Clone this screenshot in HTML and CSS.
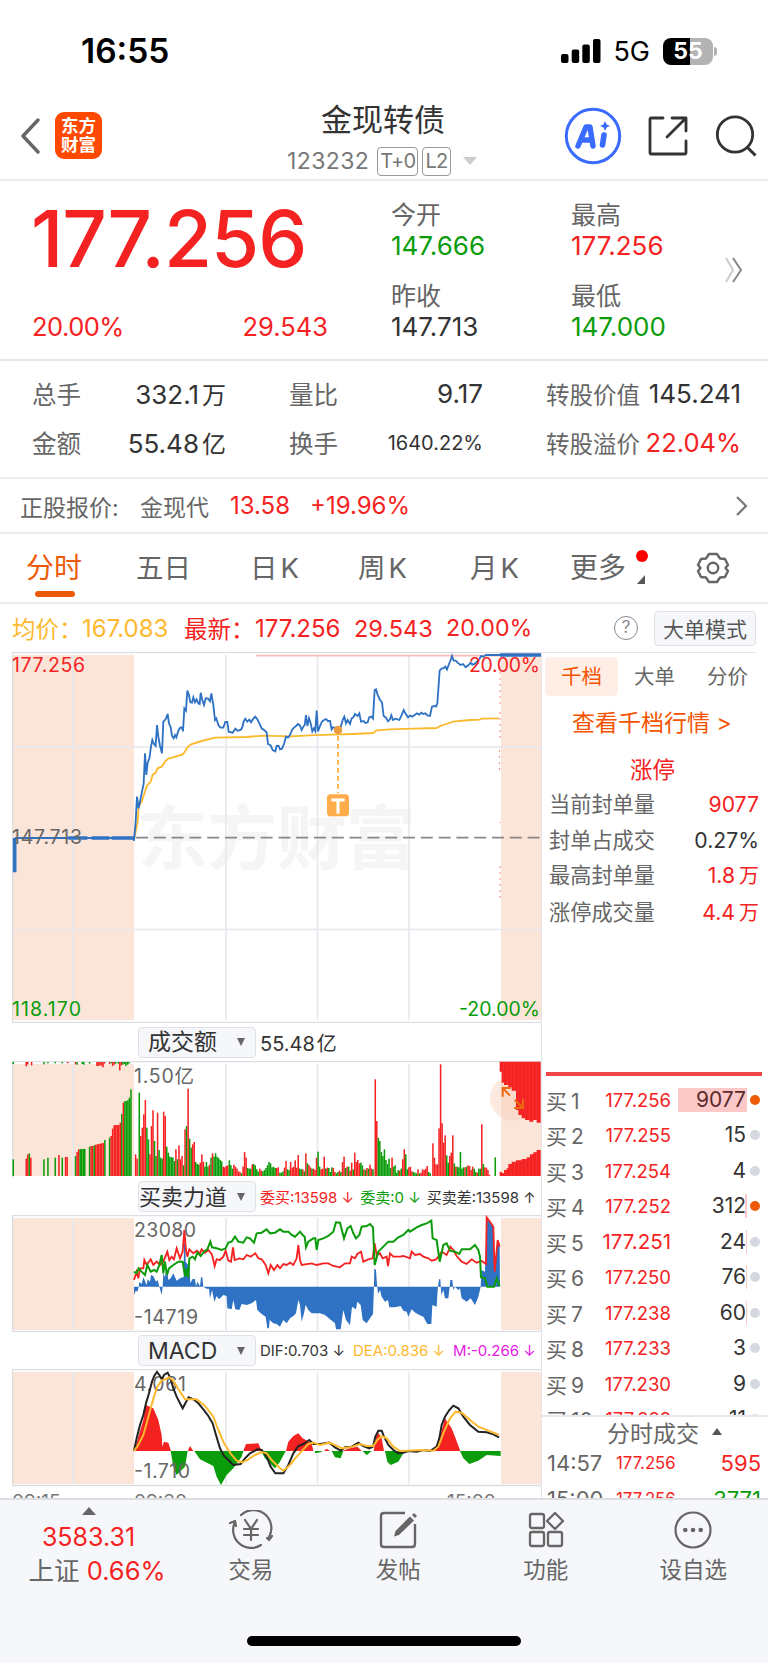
FILE: index.html
```html
<!DOCTYPE html>
<html lang="zh-CN">
<head>
  <meta charset="UTF-8" />
  <meta name="viewport" content="width=device-width, initial-scale=1.0"/>
  <title>金现转债 123232</title>
  <link rel="stylesheet" href="styles.css">
</head>
<body>
<div class="app">
  <div class="status-bar">
    <div class="clock">16:55</div>
    <div class="status-icons">
      <svg width="40" height="24" viewBox="0 0 40 24"><rect x="0" y="15" width="7.5" height="9" rx="2"/><rect x="10.7" y="10.5" width="7.5" height="13.5" rx="2"/><rect x="21.3" y="5.5" width="7.5" height="18.5" rx="2"/><rect x="32" y="0" width="7.5" height="24" rx="2"/></svg>
      <span class="network">5G</span>
      <div class="battery">55</div>
    </div>
  </div>

  <header>
    <svg class="back" width="20" height="36" viewBox="0 0 20 36"><path d="M18 2 3 18l15 16" fill="none" stroke="#666" stroke-width="3.4" stroke-linecap="round" stroke-linejoin="round"/></svg>
    <div class="logo">东方<br>财富</div>
    <div class="title">
      <h1>金现转债</h1>
      <div class="code">123232 <b>T+0</b><b>L2</b><i></i></div>
    </div>
    <div class="header-icons">
      <svg width="58" height="58" viewBox="0 0 58 58"><circle cx="29" cy="29" r="26.7" fill="none" stroke="#3a6bff" stroke-width="3"/><path d="m14 39 8-19h4l3 19M18 33h9" fill="none" stroke="#3a6bff" stroke-width="5.4" stroke-linejoin="round" stroke-linecap="round"/><path d="m40 28-1.5 10" stroke="#3a6bff" stroke-width="5.6" stroke-linecap="round"/><path d="m41 14 1.6 3.4L46 19l-3.4 1.6L41 24l-1.6-3.4L36 19l3.400-1.600z" fill="#3a6bff"/></svg>
      <svg class="share" width="42" height="42" viewBox="0 0 42 42"><path d="M16 3H4.500Q3 3 3 4.500v33Q3 39 4.500 39h33q1.500 0 1.500-1.500V26M25 3h14v13M39 3 20 22" fill="none" stroke="#333" stroke-width="2.800" stroke-linecap="round" stroke-linejoin="round"/></svg>
      <svg width="42" height="42" viewBox="0 0 42 42"><circle cx="20" cy="19.500" r="17.700" fill="none" stroke="#333" stroke-width="2.800"/><path d="m32 32 8.500 8.500" stroke="#333" stroke-width="3"/></svg>
    </div>
  </header>

  <section class="quote">
    <div class="last">
      <div class="price red">177.256</div>
      <div class="change red"><span>20.00%</span><span>29.543</span></div>
    </div>
    <dl><dt>今开</dt><dd class="green">147.666</dd><dt>昨收</dt><dd>147.713</dd></dl>
    <dl><dt>最高</dt><dd class="red">177.256</dd><dt>最低</dt><dd class="green">147.000</dd></dl>
    <svg class="more" width="20" height="26" viewBox="0 0 20 26"><path d="m2 1 7 12-7 12" fill="none" stroke="#ccc" stroke-width="2"/><path d="m9 1 8 12-8 12" fill="none" stroke="#888" stroke-width="2"/></svg>
  </section>

  <section class="stats">
    <div><label>总手</label><span>332.1<em>万</em></span></div>
    <div><label>量比</label><span>9.17</span></div>
    <div><label>转股价值</label><span>145.241</span></div>
    <div><label>金额</label><span>55.48<em>亿</em></span></div>
    <div><label>换手</label><span class="small">1640.22%</span></div>
    <div><label>转股溢价</label><span class="red">22.04%</span></div>
  </section>

  <section class="underlying">
    <span class="u-label">正股报价:</span><span class="u-name">金现代</span><span class="red u-price">13.58</span><span class="red">+19.96%</span>
    <svg width="14" height="22" viewBox="0 0 14 22"><path d="m2 2 9 9-9 9" fill="none" stroke="#777" stroke-width="2.200"/></svg>
  </section>

  <nav class="tabs">
    <a class="active">分时</a><a>五日</a><a>日<s>K</s></a><a>周<s>K</s></a><a>月<s>K</s></a><a class="dotted">更多</a>
    <svg width="34" height="34" viewBox="0 0 34 34"><path d="M13 3h8l3 4.500 5 .5 3 6-2.500 3L32 20l-3 6-5 .5L21 31h-8l-3-4.500-5-.5-3-6L4.500 17 2 14l3-6 5-.5z" fill="none" stroke="#666" stroke-width="2.400" stroke-linejoin="round"/><circle cx="17" cy="17" r="5.200" fill="none" stroke="#666" stroke-width="2.400"/></svg>
  </nav>

  <div class="info-line">
    <span class="avg">均价：</span><span class="avg a-val">167.083</span>
    <span class="red latest">最新：</span><span class="red v1">177.256</span><span class="red v2">29.543</span><span class="red v3">20.00%</span>
    <div class="help">?</div>
    <button>大单模式</button>
  </div>

  <main>
    <div class="charts">
      <svg width="530" height="371" viewBox="12 652 530 371">
        <g class="mark"><text x="138" y="864" textLength="278">东方财富</text></g>
        <path class="pre" d="M13 655h121v365H13zM501 655h40v365h-40z"/>
        <path class="grid" d="M73 655v365M226 655v365M317.500 655v365M409 655v365M13 747h528M13 929.500h528"/>
        <path class="frame" d="M12 652.500h530M12.500 652v371M12 1022.500h530"/>
        <path d="M136 837.700h404" stroke="#888" stroke-width="1.800" stroke-dasharray="12 5.800"/>
        <path d="M500 660v46M500 712v26M499.500 750v24M500 822v1M500 866v32" stroke="#f99" stroke-width="1.200" stroke-dasharray="2 4"/>
        <g class="lines" transform="translate(0 640) scale(.33333)">
          <path d="M768 47H1500" stroke="#fcb9b9"/>
          <path stroke="#fdb92e" d="M402 600L413 545 416 500 425 485 435 455 440 438 452 425 458 404 467 398 473 385 485 380 495 365 505 356 520 352 548 343 555 335 562 322 575 312 605 303 645 293 740 291 790 287 870 289 930 286 995 284 1060 282 1120 279 1130 271 1170 268 1240 266 1310 264 1320 258 1360 245 1410 240 1440 239 1446 236 1497 235"/>
          <path stroke="#2f72c4" d="M45 594H400L402 602 407 545 411 470 416 505 421 480 426 455 431 430 435 340 439 405 443 368 448 355 453 320 457 300 462 312 467 318 471 255 475 290 480 318 486 340 490 245 497 238 503 222 507 250 512 262 516 287 521 295 525 285 529 292 535 272 541 263 546 262 549 274 553 205 558 212 562 152 567 165 571 187 576 188 580 172 585 187 590 178 595 190 599 192 602 158 607 180 612 195 617 175 624 176 630 184 634 160 640 195 645 240 649 235 655 255 661 263 670 263 676 246 682 246 686 275 698 278 706 266 713 272 722 270 727 262 731 245 736 236 742 245 748 239 753 247 760 236 766 230 772 238 778 250 785 265 792 270 800 277 804 312 812 316 818 330 826 334 830 318 836 318 840 328 846 326 852 312 858 290 864 293 870 285 876 270 882 263 888 258 894 252 900 257 905 270 910 260 914 255 918 225 922 258 927 235 932 250 937 274 942 265 946 273 950 212 954 274 960 258 966 245 972 240 978 237 984 243 990 243 995 268 999 262 1014 266 1022 262 1028 240 1033 230 1038 250 1043 240 1050 252 1055 235 1060 232 1065 222 1073 228 1078 220 1083 245 1090 243 1097 249 1103 247 1108 232 1114 230 1119 236 1124 150 1128 148 1133 165 1140 180 1146 187 1151 228 1158 233 1164 244 1170 238 1174 226 1179 240 1186 236 1192 238 1198 240 1204 228 1211 210 1216 220 1224 232 1230 227 1237 230 1244 225 1251 220 1258 224 1264 218 1270 222 1276 220 1282 226 1290 228 1296 200 1303 198 1308 200 1312 190 1319 92 1325 86 1331 84 1336 80 1341 88 1347 72 1352 60 1356 48 1361 62 1367 62 1375 70 1382 75 1389 72 1397 82 1405 76 1412 68 1417 74 1424 72 1431 65 1437 60 1443 48 1450 50 1458 45H1500"/>
          <path stroke="#2f72c4" stroke-width="11" d="M1500 45H1623M44 594V697"/>
          <path stroke="#2f72c4" stroke-width="10" d="M205 594H262M275 594H328M335 594H404"/>
          <path stroke="#ffad42" stroke-dasharray="14 10" d="M1014 288V460"/>
          <circle cx="1014" cy="270" r="13" fill="#ee9c42"/>
          <rect x="981" y="463" width="66" height="66" rx="11" fill="#ffad4a"/>
          <path d="M994 480H1034M1014 480V521" stroke="#fff" stroke-width="9"/>
        </g>
        <g class="labels">
          <text class="f-red" x="12" y="672" textLength="73">177.256</text>
          <text x="12" y="844" textLength="70">147.713</text>
          <text class="f-green" x="12" y="1016" textLength="69">118.170</text>
          <text class="f-red" x="469" y="672" textLength="71">20.00%</text>
          <text class="f-green" x="459" y="1016" textLength="81">-20.00%</text>
        </g>
      </svg>

      <div class="ind-head"><div class="pick">成交额<i></i></div><span class="amount">55.48<em>亿</em></span></div>
      <svg id="volume" width="530" height="117" viewBox="12 1061 530 117">
        <path class="pre" d="M13 1064h121v112H13zM501 1064h40v112h-40z"/>
        <path class="grid" d="M73 1064v112M226 1064v112M317.500 1064v112M409 1064v112"/>
        <path class="frame" d="M12 1061.500h530M12.500 1061v117"/>
        <g class="labels"><text x="134" y="1083" textLength="60">1.50亿</text></g>
        <g transform="translate(0 1015) scale(.33333)">
          <g id="bars"></g>
          <circle cx="1537" cy="250" r="67" fill="#f9cdb7" fill-opacity=".42"/>
          <path fill="#f52222" d="M1499 140V170H1505V203H1512V210H1525V217H1535V227H1548V285H1555V300H1565V310H1575V315H1588V320H1600V315H1610V323H1622V140zM1499 483V470H1505V474H1512V465H1520V460H1525V447H1535V440H1548V436H1565V432H1580V427H1590V418H1600V412H1610V405H1622V483z"/>
          <path stroke="#fff" stroke-opacity=".22" d="M1511 141V203M1522 141V210M1533 141V220M1544 141V225M1555 141V295M1566 141V305M1577 141V312M1588 141V315M1599 141V315M1610 141V318M1533 445V483M1544 440V483M1555 440V483M1566 435V483M1577 432V483M1588 425V483M1599 416V483M1610 410V483"/>
          <path fill="none" stroke="#ec6a12" stroke-width="6" d="M1508 245V219H1532M1508 219L1530 242M1569 253V279H1542M1569 279L1544 255"/>
        </g>
      </svg>

      <div class="ind-head"><div class="pick tight">买卖力道<i></i></div><span class="red">委买:13598 ↓</span><span class="green">委卖:0 ↓</span><span>买卖差:13598 ↑</span></div>
      <svg width="530" height="117" viewBox="12 1215 530 117">
        <path class="pre" d="M13 1218h121v112H13zM501 1218h40v112h-40z"/>
        <path class="grid" d="M73 1218v112M226 1218v112M317.500 1218v112M409 1218v112"/>
        <path class="frame" d="M12 1215.500h530M12.500 1215v117M12 1331.500h530"/>
        <g class="lines" transform="translate(0 1190) scale(.33333)">
          <path class="f-blue" stroke="none" d="M402 290V315L407 302 412 305 416 292 418 275 425 282 430 262 440 285 443 268 450 275 453 255 460 258 468 275 473 270 478 290 485 315 488 290 490 250 495 262 500 230 505 270 512 265 520 250 530 272 540 265 548 262 551 262 552 160 556 160 557 215 568 230 571 280 578 266 585 268 588 289 592 275 600 289 603 262 607 262 610 290 620 296 627 296 630 325 636 300 643 335 650 318 657 328 670 315 680 318 682 355 695 358 700 330 706 358 718 360 725 342 740 345 755 340 768 330 772 360 785 372 797 380 802 415 807 415 809 390 820 400 830 402 840 410 850 390 860 400 870 385 880 378 888 370 895 330 900 345 905 395 912 370 917 345 925 360 935 370 960 370 975 375 990 388 1005 400 1008 418 1022 418 1030 360 1038 390 1050 405 1056 350 1068 358 1072 335 1082 345 1088 390 1100 400 1110 385 1119 372 1122 290 1123 235 1128 240 1130 270 1134 312 1140 300 1145 320 1155 335 1164 330 1168 352 1185 352 1202 348 1210 362 1220 365 1225 380 1235 358 1246 368 1258 375 1270 380 1282 402 1294 402 1297 345 1310 350 1313 300 1317 268 1321 268 1324 315 1330 300 1335 325 1345 325 1349 290 1351 270 1357 270 1360 300 1365 290 1375 300 1380 295 1385 325 1400 335 1412 325 1425 345 1435 320 1442 290 1444 240 1455 245 1460 82 1470 95 1480 108 1485 245 1493 150 1499 165 1500 290z"/>
          <path stroke="#f52222" d="M402 270L410 245 415 265 420 235 430 235 433 210 440 225 452 208 460 225 470 215 480 225 490 215 502 185 508 210 515 200 522 208 530 175 540 205 548 185 553 120 558 180 562 200 568 178 580 190 590 182 600 190 605 178 615 188 625 180 635 192 640 210 644 228 650 208 660 210 670 200 677 182 685 212 693 215 699 172 704 210 718 205 730 208 740 195 752 200 766 190 775 205 785 208 797 225 805 250 812 225 822 240 832 225 840 235 850 222 860 225 870 218 880 225 890 205 895 165 900 210 905 225 935 220 950 225 970 220 985 220 1000 228 1020 232 1035 220 1050 220 1055 200 1065 205 1072 192 1083 185 1090 215 1105 208 1118 205 1124 160 1130 195 1140 190 1148 205 1160 200 1164 228 1170 190 1180 200 1200 200 1210 198 1230 205 1235 185 1245 195 1260 192 1270 200 1285 205 1295 212 1308 208 1315 200 1325 185 1340 195 1351 170 1360 180 1370 198 1385 215 1400 222 1415 208 1430 218 1445 213 1458 222 1460 82 1470 95 1480 110 1484 245 1493 150 1499 170"/>
          <path stroke="#0a9c0a" stroke-width="6" d="M402 245L410 250 416 235 425 245 435 255 442 225 452 245 462 240 470 245 478 225 485 195 490 250 495 215 501 255 507 235 520 225 535 215 548 215 552 240 556 260 560 235 565 262 568 205 578 200 585 208 592 188 602 198 612 185 622 178 631 155 636 172 650 175 665 180 677 175 685 158 695 155 705 140 715 155 730 158 740 142 750 145 762 158 770 130 785 128 800 118 810 130 825 128 840 118 850 125 865 125 875 135 885 140 900 125 908 135 914 140 918 172 925 155 940 145 946 145 950 180 955 150 970 145 985 138 1000 125 1008 97 1020 98 1032 145 1042 115 1052 108 1060 130 1068 145 1078 135 1085 110 1100 108 1110 102 1119 112 1124 225 1135 185 1150 170 1165 155 1180 155 1195 142 1210 135 1225 120 1230 125 1250 112 1265 105 1280 100 1294 92 1298 145 1310 150 1319 215 1330 165 1340 160 1350 182 1365 185 1378 192 1385 178 1410 178 1425 165 1435 180 1440 200 1443 262 1455 265 1462 290 1482 290 1490 265 1499 288"/>
        </g>
        <g class="labels"><text x="134" y="1237" textLength="62">23080</text><text x="134" y="1324" textLength="64">-14719</text></g>
      </svg>

      <div class="ind-head"><div class="pick">MACD<i></i></div><span class="dif">DIF:0.703 ↓</span><span class="avg dea">DEA:0.836 ↓</span><span class="purple">M:-0.266 ↓</span></div>
      <svg width="530" height="118" viewBox="12 1369 530 118">
        <path class="pre" d="M13 1372h121v112H13zM501 1372h40v112h-40z"/>
        <path class="grid" d="M73 1372v112M226 1372v112M317.500 1372v112M409 1372v112"/>
        <path class="frame" d="M12 1369.500h530M12.500 1369v117M12 1485.500h530"/>
        <g class="labels"><text x="134" y="1391" textLength="52">4.061</text></g>
        <g class="lines" transform="translate(0 1190) scale(.33333)">
          <path class="f-red" stroke="none" d="M404 783L415 740 430 690 437 645 460 655 475 690 485 735 487 770 492 755 505 758 513 783zM563 783L570 768 580 783zM730 783L738 762 775 760 785 783zM858 783L865 755 880 738 895 730 908 745 935 760 940 783zM972 783L980 776 990 783zM1025 783L1050 775 1072 770 1085 783zM1121 783L1128 740 1135 728 1145 745 1152 783zM1305 783L1320 740 1335 685 1355 715 1365 740 1381 783z"/>
          <path class="f-green" stroke="none" d="M512 783L520 830 530 855 545 840 555 830 563 783zM583 783L600 808 640 828 650 860 663 885 680 855 700 835 725 800 730 783zM783 783L795 805 825 835 840 815 857 783zM945 783V790L965 786V783zM995 783L1005 802 1022 805 1030 783zM1088 783L1100 796 1115 783zM1155 783L1162 815 1172 825 1195 815 1210 790 1212 783zM1380 783L1390 805 1408 822 1435 812 1460 795 1502 798V783z"/>
          <path stroke="#222" stroke-width="6" d="M402 783L410 745 420 705 430 675 438 640 447 610 456 575 463 557 471 546 478 555 486 568 492 555 503 548 510 562 520 595 530 620 540 640 548 655 556 640 566 622 580 628 595 640 610 658 625 678 638 700 648 735 660 775 672 798 685 810 700 825 722 822 735 805 750 790 772 778 785 780 800 800 812 830 826 850 850 850 865 825 880 790 895 768 910 762 928 750 940 762 960 762 988 758 1005 772 1022 782 1035 772 1055 770 1075 758 1090 768 1108 775 1119 770 1126 740 1135 722 1145 722 1152 740 1165 765 1180 780 1195 790 1210 788 1225 783 1250 785 1270 780 1290 783 1310 770 1318 745 1325 705 1335 680 1348 660 1360 647 1375 655 1390 680 1410 705 1435 725 1460 727 1480 733 1497 742"/>
          <path stroke="#fdb92e" stroke-width="6" d="M402 783L415 765 430 735 440 700 452 655 462 620 472 590 485 572 508 562 520 572 540 605 555 628 570 628 590 628 615 648 640 680 655 720 672 760 695 795 710 812 727 817 745 808 765 795 785 786 800 790 815 810 840 835 850 842 870 825 890 800 910 778 925 762 940 758 960 765 988 758 1005 765 1025 775 1050 772 1080 762 1100 768 1120 768 1132 750 1145 738 1160 745 1180 770 1200 783 1270 780 1300 782 1315 770 1330 730 1350 685 1367 665 1385 668 1410 690 1435 710 1465 722 1497 735"/>
        </g>
        <g class="labels"><text x="134" y="1478" textLength="56">-1.710</text></g>
      </svg>
      <div class="times"><span>09:15</span><span>09:30</span><span>15:00</span></div>
    </div>

    <aside>
      <div class="side-tabs"><a class="active">千档</a><a>大单</a><a>分价</a></div>
      <a class="depth-link">查看千档行情 <span>&gt;</span></a>
      <h2 class="red">涨停</h2>
      <ul class="limit">
        <li>当前封单量<span class="red">9077</span></li>
        <li>封单占成交<span>0.27%</span></li>
        <li>最高封单量<span class="red">1.8<em>万</em></span></li>
        <li>涨停成交量<span class="red">4.4<em>万</em></span></li>
      </ul>
      <div class="bids" id="bids"></div>
      <div class="deals">
        <h3>分时成交<i></i></h3>
        <div class="deal"><span>14:57</span><span class="red p">177.256</span><span class="red v">595</span></div>
        <div class="deal"><span>15:00</span><span class="red p">177.256</span><span class="green v">3771</span></div>
      </div>
    </aside>
  </main>

  <footer>
    <div class="index">
      <i></i>
      <div class="red">3583.31</div>
      <div class="index-line">上证 <span class="red">0.66%</span></div>
    </div>
    <a><svg width="44" height="40" viewBox="0 0 44 40"><g fill="none" stroke="#666" stroke-width="2.200" stroke-linecap="round" stroke-linejoin="round"><path d="M12 5A18 18 0 0 1 40 27M32 35A18 18 0 0 1 6 12M1 13l5-2 1 5M38 28l2 2 3-4"/><path d="m16 10 6 9 6-9M22 19v11M15 19h14M15 25h14"/></g></svg>交易</a>
    <a><svg width="40" height="40" viewBox="0 0 40 40"><path d="M27 3H6Q3 3 3 6v28q0 3 3 3h28q3 0 3-3V14" fill="none" stroke="#666" stroke-width="2.400"/><path d="M16 26.500 17.500 21 32 6.500l4 4L21 25z" fill="#666"/><path d="m34 5 2-2 3 3-2 2z" fill="#666"/></svg>发帖</a>
    <a><svg width="40" height="40" viewBox="0 0 40 40"><g fill="none" stroke="#666" stroke-width="2.300" stroke-linejoin="round"><rect x="4" y="4" width="14" height="14" rx="2"/><path d="m29 3 8 8-8 8-8-8z"/><rect x="4" y="22" width="14" height="14" rx="2"/><rect x="22" y="22" width="14" height="14" rx="2"/></g></svg>功能</a>
    <a><svg width="40" height="40" viewBox="0 0 40 40"><circle cx="20" cy="20" r="17.500" fill="none" stroke="#666" stroke-width="2.200"/><g fill="#666"><circle cx="12.300" cy="20" r="2.300"/><circle cx="20" cy="20" r="2.300"/><circle cx="27.700" cy="20" r="2.300"/></g></svg>设自选</a>
    <div class="home-indicator"></div>
  </footer>
</div>
<script src="script.js"></script>
</body>
</html>
```
FILE: styles.css
```css
:root {
  --red: #f52222;
  --green: #0a9c0a;
  --orange: #f55300;
  --text: #333;
  --sub: #666;
  --line: #ececee;
  --bar: #f6f7fa;
}

* {
  box-sizing: border-box;
}

body {
  margin: 0;
  font-family: Inter, 'Noto Sans CJK SC', sans-serif;
  color: var(--text);
  background: #fff;
}

h1, h2, h3, ul, dl, dd {
  margin: 0;
  padding: 0;
  font-weight: 400;
}

svg {
  display: block;
  flex: none;
}

em, s {
  font-style: normal;
  text-decoration: none;
}

.red { color: var(--red); }
.green { color: var(--green); }
.avg { color: #fdb92e; }
.purple { color: #e31be3; }
.f-red { fill: var(--red); }
.f-green { fill: var(--green); }
.f-blue { fill: #2f72c4; }

.app {
  width: 768px;
  height: 1663px;
  overflow: hidden;
  display: flex;
  flex-direction: column;
}

.app > * {
  flex: none;
}

.status-bar {
  height: 92px;
  padding: 10px 50px 0 81px;
  display: flex;
  justify-content: space-between;
  align-items: center;
  color: #000;
}

.clock {
  font-size: 33.5px;
  font-weight: 600;
}

.status-icons {
  display: flex;
  align-items: center;
}

.network {
  font-size: 27px;
  margin: 0 13px 0 12px;
}

.battery {
  position: relative;
  width: 50px;
  height: 27px;
  border-radius: 8px;
  background: linear-gradient(90deg, #000 55%, #b3b3b3 55%);
  color: #fff;
  font-size: 23px;
  font-weight: 700;
  line-height: 27px;
  text-align: center;
  margin-right: 5px;
}

.battery::after {
  content: "";
  position: absolute;
  right: -4px;
  top: 9px;
  width: 3px;
  height: 9px;
  border-radius: 0 3px 3px 0;
  background: #b3b3b3;
}

header {
  height: 89px;
  border-bottom: 2px solid #ececec;
  padding: 0 11px 0 20px;
  display: flex;
  align-items: center;
}

.logo {
  width: 47px;
  height: 47px;
  margin-left: 15px;
  border-radius: 9px;
  background: #ff4800;
  color: #fff;
  font-size: 17.5px;
  font-weight: 700;
  line-height: 19px;
  padding-top: 4px;
  text-align: center;
}

.title {
  width: 210px;
  margin-left: 176px;
  text-align: center;
  align-self: flex-start;
}

.title h1 {
  font-size: 31px;
  line-height: 56px;
}

.code {
  display: flex;
  align-items: center;
  height: 26px;
  margin-left: 9px;
  font-size: 23px;
  letter-spacing: .4px;
  color: #777;
}

.code b {
  font-weight: 400;
  font-size: 20px;
  letter-spacing: -.7px;
  line-height: 27px;
  padding: 0 2px;
  border: 1.5px solid #999;
  border-radius: 4px;
  margin-left: 4px;
}

.code b:first-child {
  margin-left: 8px;
}

.code i {
  margin-left: 12px;
  border: 7px solid transparent;
  border-top: 8px solid #ccc;
  border-bottom: 0;
}

.header-icons {
  display: flex;
  align-items: center;
  margin-left: auto;
}

.share {
  margin: 0 26px 0 25px;
}

.quote {
  height: 180px;
  border-bottom: 2px solid #e2e6ee;
  display: flex;
}

.last {
  width: 391px;
  padding-left: 31px;
}

.price {
  font-size: 78px;
  font-weight: 500;
  line-height: 100px;
  margin-top: 8px;
  letter-spacing: -1px;
}

.change {
  display: flex;
  justify-content: space-between;
  width: 297px;
  padding-left: 1px;
  font-size: 25.5px;
  line-height: 30px;
  margin-top: 23px;
}

.change span:first-child {
  letter-spacing: -.5px;
}

.quote dl {
  width: 180px;
  padding-top: 18px;
  font-size: 26px;
  line-height: 32px;
}

.quote dt {
  color: var(--sub);
  font-size: 25px;
  height: 32px;
}

.quote dd {
  height: 49px;
  line-height: 30px;
}

.more {
  margin: 76px 0 0 -27px;
}

.stats {
  height: 118px;
  border-bottom: 2px solid var(--line);
  padding: 8px 27px 0 32px;
  display: grid;
  grid-template-columns: 194px 194px 195px;
  grid-auto-rows: 49px;
  justify-content: space-between;
  font-size: 26px;
}

.stats div {
  display: flex;
  justify-content: space-between;
  align-items: center;
}

.stats label {
  color: var(--sub);
  font-size: 24.5px;
}

.stats div:nth-child(3n) label {
  font-size: 23.5px;
}

.stats em {
  margin-left: 3px;
  font-size: 24px;
}

.stats .small {
  font-size: 20px;
}

.stats .red {
  font-size: 25.5px;
}

.underlying {
  height: 55px;
  border-bottom: 2px solid var(--line);
  padding: 0 19px 0 20px;
  display: flex;
  align-items: center;
  font-size: 24px;
}

.u-label, .u-name {
  color: var(--sub);
  font-size: 23px;
}

.u-label { width: 120px; }
.u-name { width: 90px; }
.u-price { width: 80px; }

.underlying svg {
  margin-left: auto;
}

.tabs {
  height: 70px;
  border-bottom: 2px solid var(--line);
  display: flex;
  align-items: center;
  font-size: 27.5px;
  color: var(--sub);
  padding-left: 26px;
}

.tabs a {
  width: 110px;
  height: 68px;
  line-height: 69px;
  position: relative;
}

.tabs a:nth-child(2) { width: 114px; }
.tabs a:nth-child(3) { width: 108px; }
.tabs a:nth-child(4) { width: 112px; }
.tabs a:nth-child(5) { width: 100px; }
.tabs a:nth-child(6) { width: 126px; }

.tabs s {
  margin-left: 3px;
}

.tabs .active {
  color: #ee5a05;
  font-size: 28px;
}

.tabs .active::after {
  content: "";
  position: absolute;
  left: 9px;
  bottom: 5px;
  width: 40px;
  height: 6px;
  border-radius: 3px;
  background: #ee5a05;
}

.dotted {
  font-size: 28px;
}

.dotted::before {
  content: "";
  position: absolute;
  left: 66px;
  top: 16px;
  width: 12px;
  height: 12px;
  border-radius: 50%;
  background: #f00;
}

.dotted::after {
  content: "";
  position: absolute;
  left: 67px;
  top: 41px;
  border-left: 8px solid transparent;
  border-bottom: 9px solid #555;
}

.info-line {
  height: 48px;
  display: flex;
  align-items: center;
  padding: 0 12px;
  font-size: 23.5px;
  white-space: nowrap;
}

.info-line span:first-child { width: 70px; }
.info-line .a-val { width: 102px; font-size: 24px; }
.latest { width: 71px; }
.info-line .v1 { width: 99px; font-size: 24px; }
.v2 { width: 92px; }
.info-line .v3 { font-size: 23.2px; }

.help {
  width: 24px;
  height: 24px;
  border: 1.7px solid #888;
  border-radius: 50%;
  color: #888;
  font-size: 17px;
  line-height: 21px;
  text-align: center;
  margin-left: auto;
  margin-right: 16px;
}

.info-line button {
  width: 102px;
  height: 35px;
  padding: 0;
  border: 1.5px solid #dfe1e6;
  border-radius: 4px;
  background: var(--bar);
  color: #555;
  font: inherit;
  font-size: 21px;
}

main {
  height: 846px;
  overflow: hidden;
  display: flex;
  padding-left: 12px;
}

.charts {
  width: 530px;
  flex: none;
}

.pre { fill: #fbe5d9; }

.grid {
  stroke: #e6e8ed;
  stroke-width: 1.6;
}

.frame {
  stroke: #dcdde3;
  stroke-width: 1.4;
}

.mark {
  fill: #f5f5f5;
  font-size: 70px;
  font-weight: 700;
}

.labels {
  font-size: 19.5px;
  fill: #666;
}

.lines {
  fill: none;
  stroke-width: 5.5;
}

.ind-head {
  height: 37px;
  padding-left: 126px;
  display: flex;
  align-items: center;
  font-size: 15px;
  white-space: nowrap;
}

svg:first-child + .ind-head {
  height: 38px;
}

.pick {
  width: 118px;
  height: 31px;
  flex: none;
  border: 1.5px solid #dfe1e6;
  border-radius: 4px;
  background: var(--bar);
  font-size: 23px;
  line-height: 28px;
  padding: 0 10px 0 9px;
  display: flex;
  justify-content: space-between;
  align-items: center;
  margin-right: 4px;
}

.pick.tight {
  padding-left: 0;
  font-size: 22px;
}

.pick i {
  border: 4.5px solid transparent;
  border-top: 8px solid #666;
  border-bottom: 0;
}

.ind-head span {
  margin-right: 6px;
}

.ind-head .dif, .ind-head .dea {
  margin-right: 8px;
}

.ind-head .amount {
  font-size: 20px;
}

.amount em {
  margin-left: 2px;
}

.times {
  height: 12px;
  overflow: hidden;
  display: flex;
  font-size: 19px;
  line-height: 30px;
  color: #777;
}

.times span {
  flex: none;
  width: 122px;
}

.times span:nth-child(2) { width: 313px; }

aside {
  width: 227px;
  margin-left: -1px;
  border-left: 1.5px solid #e3e4ea;
  display: flex;
  flex-direction: column;
}

aside > * {
  flex: none;
}

.side-tabs {
  display: flex;
  padding: 4px 0 0 3px;
  border-top: 1px solid #e3e4ea;
  margin-right: 12px;
  font-size: 20.5px;
  color: var(--sub);
  text-align: center;
}

.side-tabs a {
  width: 73px;
  flex: none;
  height: 39px;
  line-height: 39px;
  border-radius: 5px;
}

.side-tabs .active {
  background: #ffeee6;
  color: var(--orange);
}

.depth-link {
  margin: 10px 0 0 30px;
  font-size: 23px;
  line-height: 34px;
  color: var(--orange);
  white-space: nowrap;
}

aside h2 {
  font-size: 22.5px;
  line-height: 34px;
  margin-top: 13px;
  padding-left: 88px;
}

.limit {
  list-style: none;
  height: 285px;
}

.limit li {
  display: flex;
  justify-content: space-between;
  font-size: 21.2px;
  line-height: 35.5px;
  padding: 0 9px 0 7px;
  color: var(--sub);
}

.limit span:not(.red) { color: var(--text); }

.limit em {
  margin-left: 4px;
  font-size: 20px;
}

.bids {
  margin: 0 6px 0 4px;
  border-top: 4px solid #f04545;
  padding-top: 6px;
  height: 343px;
  overflow: hidden;
}

.bid {
  display: flex;
  align-items: center;
  height: 35.5px;
  font-size: 21px;
}

.bid-name {
  color: var(--sub);
  width: 57px;
  word-spacing: -2px;
  white-space: nowrap;
}

.bid-price {
  color: var(--red);
  font-size: 18.5px;
  width: 68px;
  display: flex;
  justify-content: flex-end;
}

.bid-price.big { font-size: 20.5px; }

.bid-vol {
  width: 69px;
  height: 24px;
  line-height: 24px;
  text-align: right;
  margin-left: 7px;
  padding-right: 1px;
  background: linear-gradient(#fdc8c8, #fdc8c8) no-repeat right;
  background-size: var(--w, 0) 100%;
}

.bid:first-child .bid-vol { color: #5c2b2b; }

.bid u {
  width: 10px;
  height: 10px;
  border-radius: 50%;
  background: #d5d8de;
  margin-left: 3px;
}

.bid u.hot { background: #ee5a05; }

.deals {
  border-top: 2px solid #e6e7ec;
  height: 83px;
  overflow: hidden;
}

.deals h3 {
  display: flex;
  align-items: center;
  padding-left: 65px;
  height: 29px;
  font-size: 23px;
  color: var(--sub);
}

.deals h3 i {
  margin-left: 13px;
  border: 5px solid transparent;
  border-bottom: 7px solid #555;
  border-top: 0;
}

.deal {
  display: flex;
  height: 35.5px;
  line-height: 35.5px;
  font-size: 22px;
  padding: 0 7px 0 5px;
  color: var(--sub);
}

.deal span:first-child { width: 69px; }
.deal .p { font-size: 16.8px; }
.deal .v { margin-left: auto; }

footer {
  height: 165px;
  border-top: 2px solid #dcdee2;
  background: var(--bar);
  display: flex;
  position: relative;
  color: var(--sub);
  font-size: 22.5px;
}

.index {
  width: 177px;
  text-align: center;
  font-size: 25px;
  line-height: 34px;
}

.index i {
  display: block;
  width: 14px;
  margin: 7px auto 5px;
  border: 7px solid transparent;
  border-bottom: 8px solid #666;
  border-top: 0;
}

.index-line {
  padding-left: 17px;
  font-size: 25.5px;
  white-space: nowrap;
}

footer a {
  width: 147.5px;
  display: flex;
  flex-direction: column;
  align-items: center;
  padding-top: 10px;
  line-height: 39px;
}

.home-indicator {
  position: absolute;
  left: 247px;
  bottom: 17px;
  width: 274px;
  height: 10px;
  border-radius: 5px;
  background: #000;
}
```
FILE: script.js
```js
const bids = [
  ['177.256', 9077, 69], ['177.255', 15, 0], ['177.254', 4, 0], ['177.252', 312, 2],
  ['177.251', 24, 1], ['177.250', 76, 1], ['177.238', 60, 1], ['177.233', 3, 0],
  ['177.230', 9, 0], ['177.222', 11, 0]
];

document.getElementById('bids').innerHTML = bids.map((b, i) => `
  <div class="bid">
    <span class="bid-name">买 ${i + 1}</span>
    <span class="bid-price${i === 4 ? ' big' : ''}">${b[0]}</span>
    <span class="bid-vol" style="--w: ${b[2]}px">${b[1]}</span>
    <u class="${b[1] > 100 ? 'hot' : ''}"></u>
  </div>`).join('');

// [start x, bars], one bar per minute, r = up, g = down
const volume = [
  [407, 'r65 r52'],
  [418, 'g250 r120 r145 r185 r228 g145 g110 r65 r150 r197 g105 g60 r190 g78 g55 g52 r193 r180 g88 g70 g58 g56 g56 g45 r80 g50 r92 r50 r60 g32 r140 g150 r262 g112 g85 r95 r102 g42 g36 g34 r40 r65 r43 g28 g42 g28 r34 g55 r68 g58 g68 g58 g54 g48 g44 r28 r26 r30 r32 g47 g33 g22 r34 r28 r22 r14 r12 g8 r28 r72 r55 g24 g22 g22 r35 g36 g32 g20 g13 r22 r16 g14 g18 g24 g32 g42 g38 g26 g28 g24 r24 r26'],
  [840, 'g10 g10 g14 r25 r45 g20 g18 r42 r25 r28 r47 r25 r63 g22 g20 r20 g14 r68 g38 r33 r26 g22 r22 r18 r55 g73 g28 r20 r22 r58 g22 r25 g24 g12 g26 r24 r12 g8 g12 r16 g12 r42 r58 g24 r28 g28 r16 r40 g20 r70 r42 r48 r38 g40 g32 r20 g18 r24 g22 r34 r22 g20'],
  [1126, 'r290 r165 g115 g105 g72 g60 g80 g48 g36 g52 g24 r55 g28 g32 g10 g18 r16 g22 r50 r80 g65 g20 r26 r28 r14 g12 g10 g8 r20 g8 r10 r20 r18 r22 r30 g12 g8'],
  [1299, 'r98 r55 r35 r35 r143'],
  [1322, 'r335 r158 r100 r122 g62 g40 r60 r70 r122 g38 r28 g28 g26 g72 g22 g26 r26 g28 r32 r30 r18 r28 g22 g12 r10 g22 g22 r155 g36 r26 r25 r18 r4'],
  [1486, 'g56'],
  [40, 'g50'], [79, 'r52 r65 g68 r55'], [132, 'g50'], [144, 'g55'], [166, 'g55'], [177, 'r63'], [187, 'g55'], [197, 'r57 r57'],
  [227, 'g60 r72 r80 g81 g81 g81 g81'],
  [269, 'g88 r90 r90 g92 r94 r95 r96 r97 r98 r99 g108'],
  [329, 'g115 r120 r142 r152 r153 r153 r153 r160 g186 r220 g225 g225 g228 g235 g260']
];

// small bars hanging from the top edge
const topVolume = [
  [40, 'g6'], [79, 'r13 r7'], [95, 'r10'], [132, 'g7'], [144, 'g4'], [166, 'g4'], [187, 'g4'], [203, 'r4'],
  [227, 'r7 g8'], [247, 'g6 g8'], [269, 'g5'], [291, 'r12 r12 r10 r11 r16 r5'], [329, 'r6 g4 r12 r8 g5'],
  [355, 'g5 r25 r10 g8 g6 g12 g8 g5']
];

function drawBars(list, fromTop) {
  return list.map(([start, bars]) => bars.split(' ').map((bar, i) => {
    const h = Number(bar.slice(1));
    const x = start + i * 4.58 - 2.5;
    const y = fromTop ? 141 : 483 - h;
    return `<rect class="f-${bar[0] === 'r' ? 'red' : 'green'}" x="${x}" y="${y}" width="4.6" height="${h}"/>`;
  }).join('')).join('');
}

document.getElementById('bars').innerHTML = drawBars(volume, false) + drawBars(topVolume, true);
```
